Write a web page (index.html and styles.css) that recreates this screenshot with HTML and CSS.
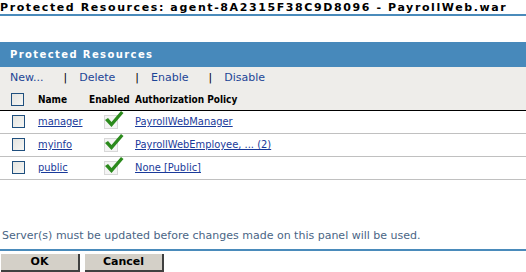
FILE: index.html
```html
<!DOCTYPE html>
<html>
<head>
<meta charset="utf-8">
<link rel="stylesheet" href="styles.css">
</head>
<body>
<h1 class="page-title">Protected Resources: agent-8A2315F38C9D8096 - PayrollWeb.war</h1>
<div class="panel">
  <div class="panel-head">Protected Resources</div>
  <div class="toolbar">
    <a class="tool">New...</a><span class="sep">|</span>
    <a class="tool">Delete</a><span class="sep">|</span>
    <a class="tool">Enable</a><span class="sep">|</span>
    <a class="tool">Disable</a>
  </div>
  <table class="grid">
    <thead>
      <tr>
        <th class="c-check"><span class="cb"></span></th>
        <th class="c-name">Name</th>
        <th class="c-en">Enabled</th>
        <th class="c-pol">Authorization Policy</th>
      </tr>
    </thead>
    <tbody>
      <tr>
        <td class="c-check"><span class="cb"></span></td>
        <td class="c-name"><a class="lnk">manager</a></td>
        <td class="c-en"><span class="tick"><svg width="20" height="18" viewBox="0 0 20 18"><path d="M1 9 L4 7 L7.5 11 L17 0 L19.5 2 L7.5 16 Z" fill="#2b8a1c"/></svg></span></td>
        <td class="c-pol"><a class="lnk">PayrollWebManager</a></td>
      </tr>
      <tr>
        <td class="c-check"><span class="cb"></span></td>
        <td class="c-name"><a class="lnk">myinfo</a></td>
        <td class="c-en"><span class="tick"><svg width="20" height="18" viewBox="0 0 20 18"><path d="M1 9 L4 7 L7.5 11 L17 0 L19.5 2 L7.5 16 Z" fill="#2b8a1c"/></svg></span></td>
        <td class="c-pol"><a class="lnk">PayrollWebEmployee, ... (2)</a></td>
      </tr>
      <tr>
        <td class="c-check"><span class="cb"></span></td>
        <td class="c-name"><a class="lnk">public</a></td>
        <td class="c-en"><span class="tick"><svg width="20" height="18" viewBox="0 0 20 18"><path d="M1 9 L4 7 L7.5 11 L17 0 L19.5 2 L7.5 16 Z" fill="#2b8a1c"/></svg></span></td>
        <td class="c-pol"><a class="lnk">None [Public]</a></td>
      </tr>
    </tbody>
  </table>
</div>
<p class="note">Server(s) must be updated before changes made on this panel will be used.</p>
<div class="buttons">
  <button class="btn">OK</button>
  <button class="btn">Cancel</button>
</div>
</body>
</html>
```
FILE: styles.css
```css
html, body {
  margin: 0;
  padding: 0;
  background: #fff;
  font-family: "DejaVu Sans", Verdana, sans-serif;
  font-size: 11px;
}
.page-title {
  margin: 0;
  padding: 1px 0 0 0;
  height: 13px;
  font-size: 11px;
  font-weight: bold;
  letter-spacing: 1.6px;
  line-height: 13px;
  color: #000;
  border-bottom: 2px solid #4a8bbb;
  white-space: nowrap;
  overflow: hidden;
}
.panel {
  margin-top: 26px;
}
.panel-head {
  height: 25px;
  background: #4789bb;
  color: #fff;
  font-weight: bold;
  font-size: 10px;
  letter-spacing: 1.4px;
  line-height: 26px;
  padding-left: 10px;
}
.toolbar {
  background: #eeedea;
  height: 22px;
  padding-left: 10px;
  display: flex;
  align-items: center;
  line-height: 22px;
}
.tool {
  color: #1d4596;
  text-decoration: none;
}
.sep {
  margin: 0 12px 0 20px;
  color: #000;
}
.grid {
  width: 100%;
  border-collapse: collapse;
}
.grid thead tr {
  background: #eeedea;
  height: 21px;
  border-bottom: 1px solid #000;
}
.grid th {
  text-align: left;
  font-family: "DejaVu Sans Condensed", "DejaVu Sans", sans-serif;
  font-size: 10px;
  font-weight: bold;
  padding: 0;
  vertical-align: middle;
  white-space: nowrap;
}
.grid tbody tr {
  height: 23px;
  border-bottom: 1px solid #c0c0c0;
}
.grid td {
  padding: 0;
  vertical-align: middle;
  white-space: nowrap;
  font-family: "DejaVu Sans Condensed", "DejaVu Sans", sans-serif;
}
.c-check { width: 38px; padding-left: 11px !important; box-sizing: border-box; }
.c-name { width: 51px; }
.c-en { width: 46px; }
.cb {
  display: block;
  width: 11px;
  height: 11px;
  border: 1px solid #1f4f7e;
  background: linear-gradient(135deg, #e4e4e0, #f6f6f4);
}
.grid tbody .cb { margin-left: 1px; }
.tick {
  display: block;
  position: relative;
  width: 12px;
  height: 12px;
  margin-left: 15px;
  border: 1px solid #d8d8d8;
  background: #f4f4f4;
}
.tick svg {
  position: absolute;
  left: -1px;
  top: -5px;
}
.lnk {
  color: #1a3a9a;
  text-decoration: underline;
}
.note {
  margin: 49px 0 0 0;
  padding-left: 2px;
  color: #4a6585;
  font-size: 11px;
  height: 20px;
  line-height: 14px;
  border-bottom: 2px solid #4a8bbb;
}
.buttons {
  display: flex;
  gap: 5px;
  padding: 3px 0 0 1px;
}
.btn {
  width: 79px;
  height: 18px;
  margin: 0;
  padding: 0;
  background: #d4d0c8;
  border: none;
  border-right: 2px solid #404040;
  border-bottom: 2px solid #404040;
  font-family: "DejaVu Sans", Verdana, sans-serif;
  font-size: 11px;
  font-weight: bold;
  color: #000;
  line-height: 16px;
}
```
